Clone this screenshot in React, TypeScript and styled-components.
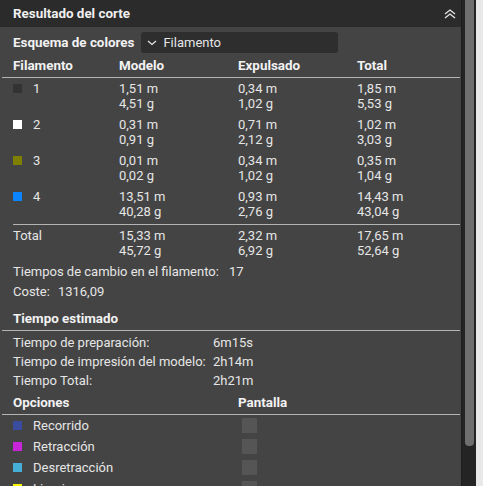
import styled, { createGlobalStyle } from 'styled-components';

const GlobalStyle = createGlobalStyle`
  html, body {
    margin: 0;
    padding: 0;
    background: #e8e8e8;
  }
  body {
    font-family: Roboto, "Noto Sans", sans-serif;
    font-size: 13px;
    color: #e6e6e6;
  }
`;

type Filament = {
  id: string;
  color: string;
  model: [string, string];
  purge: [string, string];
  total: [string, string];
};

const filaments: Filament[] = [
  { id: '1', color: '#333333', model: ['1,51 m', '4,51 g'], purge: ['0,34 m', '1,02 g'], total: ['1,85 m', '5,53 g'] },
  { id: '2', color: '#ffffff', model: ['0,31 m', '0,91 g'], purge: ['0,71 m', '2,12 g'], total: ['1,02 m', '3,03 g'] },
  { id: '3', color: '#7f7f00', model: ['0,01 m', '0,02 g'], purge: ['0,34 m', '1,02 g'], total: ['0,35 m', '1,04 g'] },
  { id: '4', color: '#0a84ff', model: ['13,51 m', '40,28 g'], purge: ['0,93 m', '2,76 g'], total: ['14,43 m', '43,04 g'] },
];

const times = [
  ['Tiempo de preparación:', '6m15s'],
  ['Tiempo de impresión del modelo:', '2h14m'],
  ['Tiempo Total:', '2h21m'],
];

const options = [
  { label: 'Recorrido', color: '#3a4ca0' },
  { label: 'Retracción', color: '#c825d8' },
  { label: 'Desretracción', color: '#45afd6' },
  { label: 'Limpiar', color: '#f5f500' },
];

const Page = styled.div`
  display: flex;
  height: 486px;
  overflow: hidden;
`;

const Panel = styled.div`
  width: 461px;
  background: #444444;
  overflow: hidden;
`;

const Track = styled.div`
  width: 15px;
  background: #242424;
  border-left: 1px solid #1c1c1c;
  box-sizing: border-box;
  display: flex;
  justify-content: center;
`;

const Thumb = styled.div`
  width: 9px;
  height: 446px;
  margin-left: 1px;
  background: #6e6e6e;
  border-radius: 0 0 4px 4px;
`;

const Header = styled.div`
  height: 27px;
  background: #2b2b2b;
  display: flex;
  align-items: center;
  justify-content: space-between;
  padding: 0 4px 0 13px;
  font-weight: 700;
  font-size: 13.4px;
  color: #f0f0f0;
`;

const SchemeRow = styled.div`
  display: flex;
  align-items: center;
  gap: 7px;
  margin-top: 5px;
  padding: 0 13px;
  height: 21px;
`;

const Bold = styled.span`
  font-weight: 700;
  font-size: 13.4px;
  color: #f2f2f2;
`;

const Select = styled.div`
  width: 197px;
  height: 21px;
  background: #2e2e2e;
  border-radius: 3px;
  display: flex;
  align-items: center;
  gap: 6px;
  padding-left: 6px;
  box-sizing: border-box;
`;

const SectionHead = styled.div<{ $top: number; $cols: string }>`
  display: grid;
  grid-template-columns: ${(p) => p.$cols};
  margin: ${(p) => p.$top}px 1px 0 2px;
  padding-left: 11px;
  height: 23px;
  align-items: center;
  border-bottom: 1px solid #b4b4b4;
  font-weight: 700;
  font-size: 13.4px;
  color: #f2f2f2;
`;

const Grid = styled.div<{ $ruled?: boolean }>`
  display: grid;
  grid-template-columns: 106px 119px 119px 1fr;
  margin-left: 13px;
  margin-right: 1px;
  padding-bottom: ${(p) => (p.$ruled ? '2px' : '0')};
  line-height: 15.5px;
  border-bottom: ${(p) => (p.$ruled ? '1px solid #b4b4b4' : 'none')};
`;

const Row = styled.div`
  display: contents;
`;

const Cell = styled.div`
  display: flex;
  flex-direction: column;
  padding: 2.5px 0;
`;

const Swatch = styled.span<{ $color: string }>`
  display: inline-block;
  width: 9px;
  height: 9px;
  background: ${(p) => p.$color};
  margin-right: 11px;
`;

const Line = styled.div<{ $gap: number }>`
  padding: 0 13px;
  height: 20px;
  display: flex;
  align-items: center;
  gap: ${(p) => p.$gap}px;
`;

const TimeRows = styled.div`
  display: grid;
  grid-template-columns: 200px 1fr;
  padding: 2px 13px 0;
  grid-auto-rows: 19px;
  align-items: center;
`;

const OptionGrid = styled.div`
  display: grid;
  grid-template-columns: 229px 1fr;
  padding-left: 13px;
  grid-auto-rows: 21px;
  align-items: center;
`;

const OptionLabel = styled.div`
  display: flex;
  align-items: center;
  position: relative;
`;

const Check = styled.span`
  display: block;
  width: 15px;
  height: 15px;
  background: #555555;
`;

const Picker = styled.span`
  position: absolute;
  left: 76px;
  top: 8px;
  width: 25px;
  height: 20px;
  background: #1d1d1d;
`;

const Chevrons = () => (
  <svg width="14" height="12" viewBox="0 0 14 12" fill="none" stroke="#e6e6e6" strokeWidth="1.3">
    <polyline points="2,6 7,2 12,6" />
    <polyline points="2,10 7,6 12,10" />
  </svg>
);

const Caret = () => (
  <svg width="10" height="6" viewBox="0 0 10 6" fill="none" stroke="#e6e6e6" strokeWidth="1.2">
    <polyline points="1,1 5,4.5 9,1" />
  </svg>
);

const TABLE_COLS = '106px 119px 119px 1fr';

export default function App() {
  return (
    <Page>
      <GlobalStyle />
      <Panel>
        <Header>
          <span>Resultado del corte</span>
          <Chevrons />
        </Header>
        <SchemeRow>
          <Bold>Esquema de colores</Bold>
          <Select>
            <Caret />
            Filamento
          </Select>
        </SchemeRow>
        <SectionHead $top={1} $cols={TABLE_COLS}>
          <span>Filamento</span>
          <span>Modelo</span>
          <span>Expulsado</span>
          <span>Total</span>
        </SectionHead>
        <Grid $ruled>
          {filaments.map((f) => (
            <Row key={f.id}>
              <Cell>
                <span>
                  <Swatch $color={f.color} />
                  {f.id}
                </span>
              </Cell>
              <Cell>
                <span>{f.model[0]}</span>
                <span>{f.model[1]}</span>
              </Cell>
              <Cell>
                <span>{f.purge[0]}</span>
                <span>{f.purge[1]}</span>
              </Cell>
              <Cell>
                <span>{f.total[0]}</span>
                <span>{f.total[1]}</span>
              </Cell>
            </Row>
          ))}
        </Grid>
        <Grid>
          <Cell>Total</Cell>
          <Cell>
            <span>15,33 m</span>
            <span>45,72 g</span>
          </Cell>
          <Cell>
            <span>2,32 m</span>
            <span>6,92 g</span>
          </Cell>
          <Cell>
            <span>17,65 m</span>
            <span>52,64 g</span>
          </Cell>
        </Grid>
        <Line $gap={10}>
          <span>Tiempos de cambio en el filamento:</span>
          <span>17</span>
        </Line>
        <Line $gap={8}>
          <span>Coste:</span>
          <span>1316,09</span>
        </Line>
        <SectionHead $top={6} $cols="1fr">
          <span>Tiempo estimado</span>
        </SectionHead>
        <TimeRows>
          {times.map(([k, v]) => (
            <Row key={k}>
              <span>{k}</span>
              <span>{v}</span>
            </Row>
          ))}
        </TimeRows>
        <SectionHead $top={1} $cols="225px 1fr">
          <span>Opciones</span>
          <span>Pantalla</span>
        </SectionHead>
        <OptionGrid>
          {options.map((o, i) => (
            <Row key={o.label}>
              <OptionLabel>
                <Swatch $color={o.color} />
                {o.label}
                {i === 3 && <Picker />}
              </OptionLabel>
              <Check />
            </Row>
          ))}
        </OptionGrid>
      </Panel>
      <Track>
        <Thumb />
      </Track>
    </Page>
  );
}
